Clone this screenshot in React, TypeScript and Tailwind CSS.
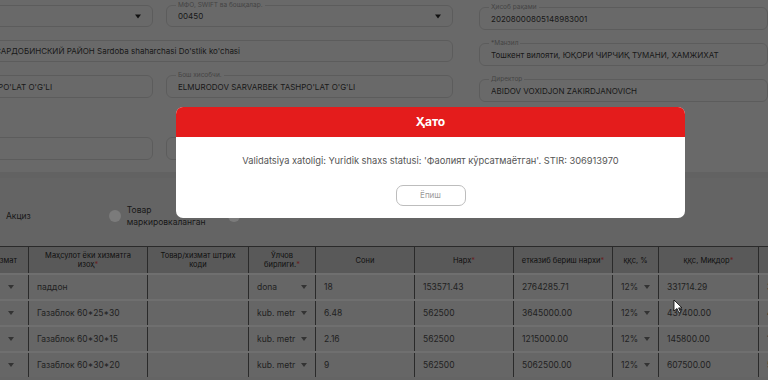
import React from "react";

type FieldProps = {
  label?: string;
  value?: string;
  arrow?: boolean;
  className?: string;
};

const Caret = () => (
  <svg className="h-[5px] w-[6px] text-[#222]" viewBox="0 0 6 4" fill="currentColor">
    <path d="M0 0h6L3 4z" />
  </svg>
);

const Field: React.FC<FieldProps> = ({ label, value, arrow, className = "" }) => (
  <div
    className={`relative flex h-[22px] items-center rounded-[6px] border border-[#b9b9b9] px-[11px] ${className}`}
  >
    {label && (
      <span className="absolute -top-[5px] left-[9px] bg-[#d3d3d3] px-[2px] text-[6.5px] leading-[8px] text-[#8a8a8a]">
        {label}
      </span>
    )}
    <span className="flex-1 truncate whitespace-nowrap text-[8px] text-[#333]">{value}</span>
    {arrow && <Caret />}
  </div>
);

const cols = "grid-cols-[60px_119px_101px_67px_99px_99px_99px_46px_100px_100px]";

const rows = [
  ["", "паддон", "", "dona", "18", "153571.43", "2764285.71", "12%", "331714.29", "3096000.00"],
  ["", "Газаблок 60*25*30", "", "kub. metr", "6.48", "562500", "3645000.00", "12%", "437400.00", "4082400.00"],
  ["", "Газаблок 60*30*15", "", "kub. metr", "2.16", "562500", "1215000.00", "12%", "145800.00", "1360800.00"],
  ["", "Газаблок 60*30*20", "", "kub. metr", "9", "562500", "5062500.00", "12%", "607500.00", "5670000.00"],
];

const Req = () => <span className="text-[#c44]">*</span>;

const RowArrow = () => (
  <svg className="h-[4px] w-[6px] text-[#666]" viewBox="0 0 6 4" fill="currentColor">
    <path d="M0 0h6L3 4z" />
  </svg>
);

export default function App() {
  return (
    <div className="relative h-[380px] w-[768px] overflow-hidden bg-[#c9c9c9] font-['Inter',sans-serif]">
      {/* form card */}
      <div className="flex h-[172px] bg-[#d3d3d3] pt-[5px]">
        <div className="-ml-[47px] flex flex-col">
          <div className="grid grid-cols-[200px_137px_137px] gap-x-[13px]">
            <Field arrow />
            <Field className="col-span-2" label="МФО, SWIFT ва бошқалар." value="00450" arrow />
          </div>
          <div className="mt-[13px] grid grid-cols-[200px_137px_137px] gap-x-[13px]">
            <Field
              className="col-span-3 !pl-[41px]"
              value="САРДОБИНСКИЙ РАЙОН Sardoba shaharchasi Do'stlik ko'chasi"
            />
          </div>
          <div className="mt-[13px] grid grid-cols-[200px_137px_137px] gap-x-[13px]">
            <Field className="!h-[23px] !pl-[23px]" value="TASHPO'LAT O'G'LI" />
            <Field className="col-span-2 !h-[23px]" label="Бош хисобчи." value="ELMURODOV SARVARBEK TASHPO'LAT O'G'LI" />
          </div>
          <div className="mt-[39px] grid grid-cols-[200px_137px_137px] gap-x-[13px]">
            <Field className="!h-[23px]" />
            <Field className="!h-[23px]" />
          </div>
        </div>
        <div className="ml-[26px] flex w-[290px] flex-col gap-[13px] pt-[2px]">
          <Field className="!h-[23px]" label="Ҳисоб рақами" value="20208000805148983001" />
          <Field className="!h-[23px]" label="*Манзил" value="Тошкент вилояти, ЮҚОРИ ЧИРЧИҚ ТУМАНИ, ХАМЖИХАТ" />
          <Field className="!h-[23px]" label="Директор" value="ABIDOV VOXIDJON ZAKIRDJANOVICH" />
        </div>
      </div>

      {/* options */}
      <div className="flex h-[74px] items-center border-t-[6px] border-[#c4c4c4] pt-[8px]">
        <span className="ml-[6px] text-[8.5px] text-[#333]">Акциз</span>
        <span className="ml-[78px] h-[12px] w-[12px] rounded-full bg-[#f6f6f6]" />
        <span className="ml-[6px] text-[8.5px] leading-[12px] text-[#333]">
          Товар
          <br />
          маркировкаланган
        </span>
        <span className="ml-[22px] h-[12px] w-[12px] rounded-full bg-[#f6f6f6]" />
      </div>

      {/* table */}
      <div className="-ml-[31px] w-[890px] border-t border-[#555]">
        <div className={`grid ${cols} h-[26px] bg-[#b3b3b3] text-[7.5px] leading-[9px] text-[#222]`}>
          {[
            <>Хизмат</>,
            <>Маҳсулот ёки хизматга изоҳ<Req /></>,
            <>Товар/хизмат штрих коди</>,
            <>Ўлчов бирлиги.<Req /></>,
            <>Сони</>,
            <>Нарх<Req /></>,
            <>етказиб бериш нархи<Req /></>,
            <>ққс, %</>,
            <>ққс, Миқдор<Req /></>,
            <>Жами</>,
          ].map((h, i) => (
            <div
              key={i}
              className={`flex items-center border-r border-[#555] text-center ${
                i === 0 ? "justify-end pr-[11px]" : i === 6 ? "justify-center px-[2px] whitespace-nowrap" : "justify-center px-[8px]"
              }`}
            >
              <span>{h}</span>
            </div>
          ))}
        </div>
        {rows.map((r, ri) => (
          <div
            key={ri}
            className={`grid ${cols} h-[26px] border-t-2 border-[#dedede] bg-[#cccccc] text-[8.5px] text-[#444]`}
          >
            {r.map((c, ci) => (
              <div key={ci} className="flex items-center border-r border-[#555] px-[8px]">
                {ci === 0 && (
                  <span className="ml-auto mr-[6px]">
                    <RowArrow />
                  </span>
                )}
                {ci !== 0 && <span className="flex-1 whitespace-nowrap">{c}</span>}
                {(ci === 3 || ci === 7) && <RowArrow />}
              </div>
            ))}
          </div>
        ))}
      </div>

      {/* backdrop */}
      <div className="absolute inset-0 bg-black/50" />

      {/* modal */}
      <div className="absolute left-[176px] top-[107px] w-[509px] overflow-hidden rounded-[7px] bg-white">
        <div className="flex h-[30px] items-center justify-center bg-[#e41c1c] text-[12px] font-bold text-white">
          Ҳато
        </div>
        <div className="flex flex-col items-center pb-[12px] pt-[17px]">
          <p className="text-[9.3px] text-[#555]">
            Validatsiya xatoligi: Yuridik shaxs statusi: 'Фаолият кўрсатмаётган'. STIR: 306913970
          </p>
          <button className="mt-[17px] h-[21px] w-[70px] rounded-[7px] border border-[#bdbdbd] text-[8px] text-[#9a9a9a]">
            Ёпиш
          </button>
        </div>
      </div>

      {/* mouse pointer */}
      <svg className="absolute left-[673px] top-[299px] h-[15px] w-[10px]" viewBox="0 0 10 15">
        <path d="M1 1v11l3-2.5 2 4.5 1.6-.7-2-4.4H9z" fill="#fff" stroke="#000" strokeWidth="0.8" />
      </svg>
    </div>
  );
}
